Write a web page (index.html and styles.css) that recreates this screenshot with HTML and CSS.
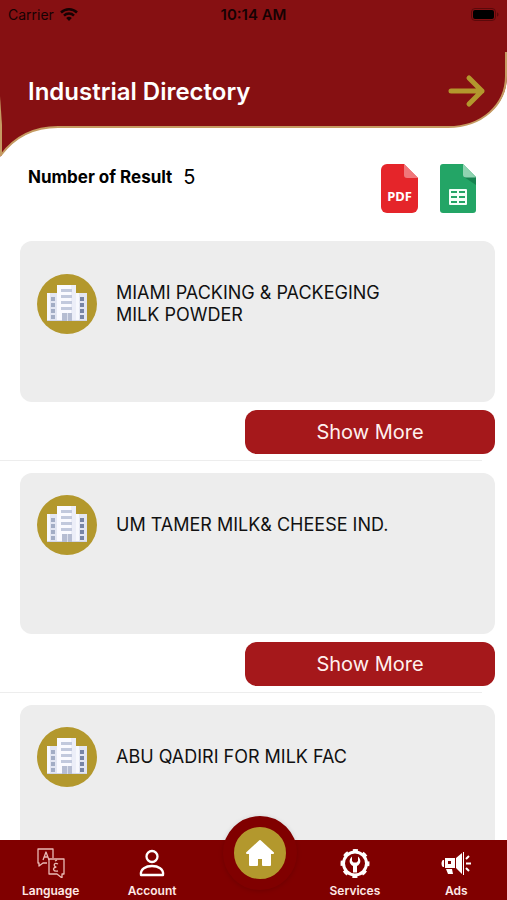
FILE: index.html
```html
<!DOCTYPE html>
<html lang="en">
  <head>
    <meta charset="UTF-8" />
    <meta name="viewport" content="width=device-width, initial-scale=1.0" />
    <title>Industrial Directory</title>
    <link rel="stylesheet" href="styles.css">
  </head>
  <body>
    <svg class="symbols" aria-hidden="true">
      <symbol id="building" viewBox="0 0 60 60">
        <circle cx="30" cy="30" r="30" fill="#b3982d" />
        <path d="M10 19h12v28H10zM38 19h12v28H38z" fill="#e3e6f2" />
        <path d="M10 19h3v28h-3zM38 19h4v28h-4z" fill="#f7f8fd" />
        <path d="M20 11h19v36H20z" fill="#fafaff" />
        <path d="M34 11h5v36h-5z" fill="#eceef8" />
        <path d="M10 46h40v1H10z" fill="#d3d7e8" />
        <path d="M24 15h11v3H24zM24 21h11v3H24zM24 27h11v3H24zM24 33h11v3H24z" fill="#c2c9dd" />
        <path d="M25 39h10v8H25z" fill="#b6bdd2" />
        <path d="M30 39h1v8h-1z" fill="#dce0ed" />
        <path d="M14 23h4v4h-4zM14 29h4v4h-4zM14 35h4v4h-4zM14 41h4v4h-4z" fill="#a3adc5" />
        <path d="M43 23h4v4h-4zM43 29h4v4h-4zM43 35h4v4h-4zM43 41h4v4h-4z" fill="#7885a5" />
      </symbol>
    </svg>

    <header class="header">
      <svg class="header-shape" viewBox="0 0 507 158" preserveAspectRatio="none" aria-hidden="true">
        <path d="M0 0H507V76C507 105 482 127 448 127H58C32 127 13 139 0 157Z" fill="#861012" />
        <path d="M506 52V76C506 105 482 127 448 127H58C32 127 13 139 1 155" fill="none" stroke="#c59b62" stroke-width="2" />
        <path d="M0 96L2 125V156H0Z" fill="#c59b62" />
      </svg>
      <div class="status-bar">
        <span class="carrier">
          Carrier
          <svg width="18" height="13" viewBox="0 0 18 13" aria-hidden="true">
            <path d="M1 4.5a11.500 11.500 0 0 1 16 0M4 7.600a7.200 7.200 0 0 1 10 0" fill="none" stroke="#160203" stroke-width="2.500" />
            <path d="M6.200 10a4 4 0 0 1 5.600 0L9 13z" fill="#160203" />
          </svg>
        </span>
        <span class="time">10:14 AM</span>
        <span class="battery">
          <svg width="28" height="13" viewBox="0 0 28 13" aria-hidden="true">
            <rect x=".5" y=".5" width="24" height="12" rx="3.500" fill="none" stroke="#5a090a" />
            <rect x="2" y="2" width="21" height="9" rx="2" fill="#000" />
            <path d="M26 4.500c2 .6 2 3.400 0 4z" fill="#5a090a" />
          </svg>
        </span>
      </div>
      <div class="title-bar">
        <h1>Industrial Directory</h1>
        <button type="button" class="icon-btn" aria-label="Next">
          <svg width="38" height="34" viewBox="0 0 38 34" fill="none" stroke="#b3982d" stroke-width="5" stroke-linecap="round" stroke-linejoin="round" aria-hidden="true">
            <path d="M3 17H34M21 4L34 17L21 30" />
          </svg>
        </button>
      </div>
    </header>

    <main class="content">
      <div class="summary">
        <p><strong>Number of Result</strong> <span>5</span></p>
        <div class="exports">
          <button type="button" class="icon-btn" aria-label="Export PDF">
            <svg width="38" height="50" viewBox="0 0 38 50" aria-hidden="true">
              <path d="M6 0H23L37 14V43a6 6 0 0 1-6 6H6a6 6 0 0 1-6-6V6a6 6 0 0 1 6-6z" fill="#e5252a" />
              <path d="M23 0L37 14H26a3 3 0 0 1-3-3z" fill="#f0777a" />
              <text x="18.500" y="37" text-anchor="middle" class="pdf-text">PDF</text>
            </svg>
          </button>
          <button type="button" class="icon-btn" aria-label="Export spreadsheet">
            <svg width="37" height="50" viewBox="0 0 37 50" aria-hidden="true">
              <path d="M3 0H23L36 13V46a3 3 0 0 1-3 3H3a3 3 0 0 1-3-3V3a3 3 0 0 1 3-3z" fill="#23a566" />
              <path d="M24 13H36V21z" fill="#168350" />
              <path d="M23 0L36 13.500H26a3 3 0 0 1-3-3z" fill="#90d3b1" />
              <rect x="9" y="25" width="18" height="16" rx="1" fill="#f4fff9" />
              <path d="M11 27h6v2h-6zM19 27h6v2h-6zM11 32h6v2h-6zM19 32h6v2h-6zM11 37h6v2h-6zM19 37h6v2h-6z" fill="#23a566" />
            </svg>
          </button>
        </div>
      </div>

      <ul class="results">
        <li>
          <div class="card">
            <div class="company">
              <svg class="avatar" aria-hidden="true"><use href="#building" /></svg>
              <h2>MIAMI PACKING &amp; PACKEGING MILK POWDER</h2>
            </div>
          </div>
          <button type="button" class="more-btn">Show More</button>
        </li>
        <li>
          <div class="card">
            <div class="company">
              <svg class="avatar" aria-hidden="true"><use href="#building" /></svg>
              <h2>UM TAMER MILK&amp; CHEESE IND.</h2>
            </div>
          </div>
          <button type="button" class="more-btn">Show More</button>
        </li>
        <li>
          <div class="card">
            <div class="company">
              <svg class="avatar" aria-hidden="true"><use href="#building" /></svg>
              <h2>ABU QADIRI FOR MILK FAC</h2>
            </div>
          </div>
        </li>
      </ul>
    </main>

    <nav class="tabs">
      <a href="#language">
        <svg width="30" height="30" viewBox="0 0 30 30" fill="none" stroke="#e9b9b4" stroke-width="1.300" stroke-linejoin="round" aria-hidden="true">
          <path d="M11 15H7L3 18V15H2V1H17V10M7 12L10 4L13 12M8 9H12" />
          <path d="M13 11H28V26H26V30L21 26H13Z" />
          <path d="M22 16C18 14 17 18 20 19C16 20 17 24 22 23M19 13L21 12" />
        </svg>
        <span>Language</span>
      </a>
      <a href="#account">
        <svg width="30" height="30" viewBox="0 0 30 30" fill="none" stroke="#fff" stroke-width="2.300" stroke-linejoin="round" aria-hidden="true">
          <circle cx="15" cy="8.500" r="5.500" />
          <path d="M4 27C3 21 9 18 15 18S27 21 26 27Z" />
        </svg>
        <span>Account</span>
      </a>
      <span class="spacer"></span>
      <a href="#services">
        <svg width="30" height="30" viewBox="0 0 30 30" aria-hidden="true">
          <circle cx="15" cy="15.500" r="11.500" fill="none" stroke="#fff" stroke-width="3" />
          <circle cx="15" cy="15.500" r="13" fill="none" stroke="#fff" stroke-width="3" stroke-dasharray="5 5.210" stroke-dashoffset="2.500" />
          <path d="M12 8.500C8.500 11.500 9 16 13 18V24.500H17V18C21 16 21.500 11.500 18 8.500V13L16.500 14.500H13.500L12 13Z" fill="#fff" />
        </svg>
        <span>Services</span>
      </a>
      <a href="#ads">
        <svg width="30" height="30" viewBox="0 0 30 30" aria-hidden="true">
          <path d="M2 12H3V19H2C0 18 0 13 2 12zM4 10H14V20H4zM5 21H11L12 26H7zM15 10L21 5V26L15 20zM22 4H23V27H22z" fill="#fff" />
          <rect x="7" y="13" width="3" height="3" fill="#800000" />
          <path d="M25 11L28 8M25 15.500H30M25 20L28 23" fill="none" stroke="#fff" stroke-width="2" />
        </svg>
        <span>Ads</span>
      </a>
      <a class="home" href="#home" aria-label="Home">
        <svg width="30" height="28" viewBox="0 0 30 28" fill="#fff" stroke="#fff" stroke-width="2" stroke-linejoin="round" aria-hidden="true">
          <path d="M15 2L28 14H25V26H18V19H12V26H5V14H2L15 2Z" />
        </svg>
      </a>
    </nav>
  </body>
</html>
```
FILE: styles.css
```css
* {
  box-sizing: border-box;
}
body {
  display: flex;
  flex-direction: column;
  height: 100vh;
  margin: 0;
  font-family: Inter, "Liberation Sans", sans-serif;
  background-color: #fff;
  color: #111;
}
h1,
h2,
p,
ul {
  margin: 0;
  padding: 0;
}
.symbols {
  display: none;
}
svg {
  display: block;
}
.icon-btn {
  padding: 0;
  border: none;
  background: none;
  cursor: pointer;
}

/* header */
.header {
  position: relative;
  flex-shrink: 0;
  padding-bottom: 50px;
}
.header-shape {
  position: absolute;
  top: 0;
  left: 0;
  z-index: -1;
  width: 100%;
  height: 100%;
}
.status-bar {
  display: grid;
  grid-template-columns: 1fr auto 1fr;
  align-items: center;
  height: 28px;
  padding: 0 8px;
  font-size: 14px;
  color: #160203;
}
.carrier {
  display: flex;
  align-items: center;
  gap: 6px;
}
.time {
  font-size: 15px;
  font-weight: 600;
}
.battery {
  justify-self: end;
}
.title-bar {
  display: flex;
  align-items: center;
  justify-content: space-between;
  margin-top: 46px;
  padding: 0 21px 0 28px;
}
.title-bar h1 {
  font-size: 24px;
  font-weight: 600;
  color: #fff;
}

/* results */
.content {
  flex: 1;
  min-height: 0;
  overflow: hidden;
}
.summary {
  display: flex;
  justify-content: space-between;
  padding: 6px 30px 27px 28px;
}
.summary p {
  display: flex;
  gap: 11px;
  font-size: 17px;
  line-height: 27px;
  color: #000;
}
.summary strong {
  font-weight: 700;
}
.summary span {
  font-size: 20px;
}
.exports {
  display: flex;
  gap: 21px;
}
.pdf-text {
  font-family: "Noto Sans", sans-serif;
  font-size: 13px;
  font-weight: 700;
  fill: #fff;
}
.results {
  list-style: none;
}
.results li {
  display: flex;
  flex-direction: column;
  gap: 8px;
  margin-bottom: 12px;
  padding: 0 12px 7px 20px;
  background: linear-gradient(#ededed, #ededed) left bottom / calc(100% - 25px) 1px no-repeat;
}
.card {
  min-height: 161px;
  padding: 41px 96px 20px 17px;
  border-radius: 12px;
  background-color: #ededed;
}
.company {
  display: flex;
  align-items: center;
  gap: 19px;
}
/* taller than a one-line name, so the name keeps its place */
.avatar {
  flex-shrink: 0;
  width: 60px;
  height: 60px;
  margin: -19px 0;
}
.company h2 {
  font-size: 18px;
  font-weight: 400;
  line-height: 22px;
}
.more-btn {
  align-self: flex-end;
  width: 250px;
  height: 44px;
  border: none;
  border-radius: 12px;
  background-color: #a5181b;
  color: #fff0ee;
  font-family: inherit;
  font-size: 20px;
  cursor: pointer;
}

/* bottom tabs */
.tabs {
  position: relative;
  display: grid;
  grid-template-columns: repeat(5, 1fr);
  flex-shrink: 0;
  height: 60px;
  padding-top: 8px;
  background-color: #800000;
}
.tabs a {
  display: flex;
  flex-direction: column;
  align-items: center;
  gap: 5px;
  color: #ffe9e6;
  font-size: 12px;
  font-weight: 600;
  line-height: 16px;
  text-decoration: none;
}
.tabs .home {
  position: absolute;
  top: -24px;
  left: calc(50% - 31px);
  justify-content: center;
  width: 74px;
  height: 74px;
  border: 11px solid #800000;
  border-radius: 50%;
  background-color: #b3982d;
  box-shadow: 0 1px 5px rgba(0, 0, 0, 0.15);
}
```
